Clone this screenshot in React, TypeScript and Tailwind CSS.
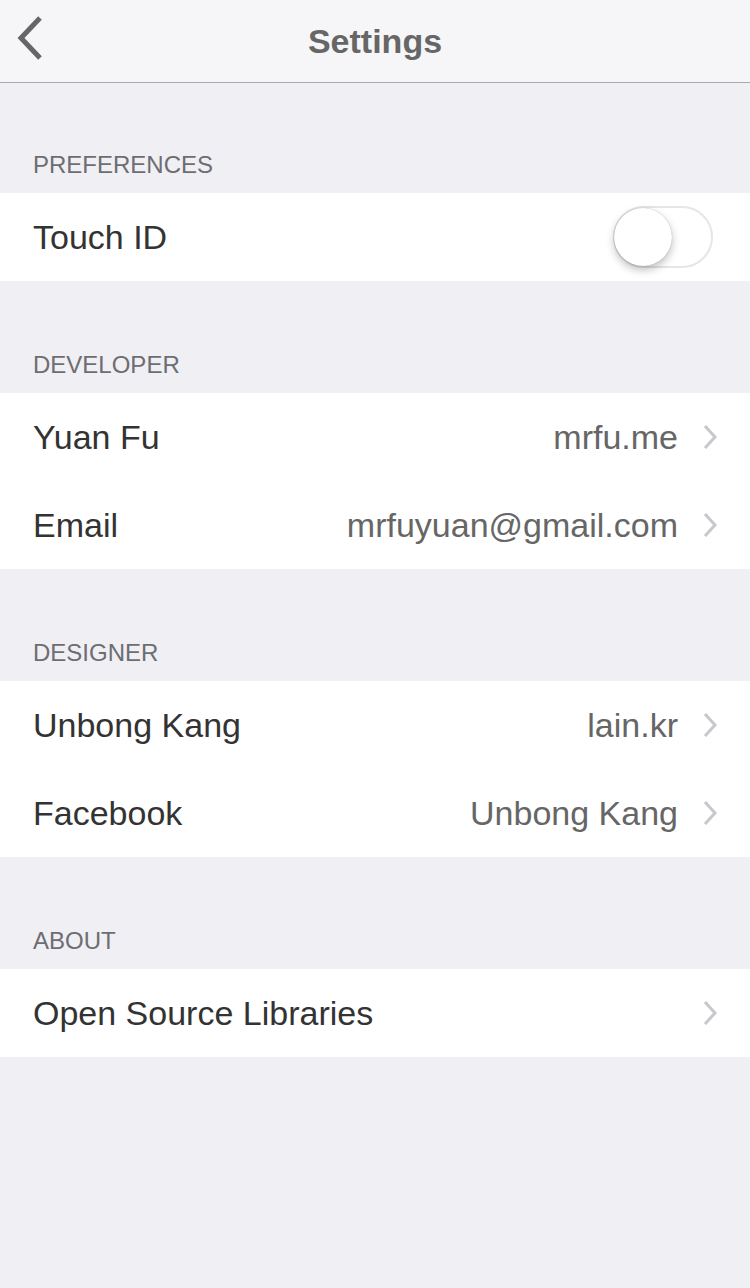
import React from "react";

const Chevron = () => (
  <svg width="16" height="26" viewBox="0 0 16 26" className="shrink-0">
    <path d="M3 2 L13 13 L3 24" fill="none" stroke="#c7c7cc" strokeWidth="3" />
  </svg>
);

const SectionLabel = ({ text, first }: { text: string; first?: boolean }) => (
  <div
    className={
      (first ? "h-[110px] " : "h-[112px] ") +
      "flex items-end pb-[16px] pl-[33px] text-[24px] text-[#6d6d72] leading-none"
    }
  >
    {text}
  </div>
);

const Row = ({ label, value }: { label: string; value?: string }) => (
  <div className="h-[88px] flex items-center pl-[33px] pr-[32px] bg-white">
    <span className="text-[34px] text-[#333333] flex-1">{label}</span>
    {value && <span className="text-[34px] text-[#666666] mr-[24px]">{value}</span>}
    <Chevron />
  </div>
);

export default function App() {
  return (
    <div
      className="w-[750px] h-[1288px] bg-[#efeff4] overflow-hidden"
      style={{ fontFamily: '"Liberation Sans", Arial, sans-serif' }}
    >
      <div className="h-[83px] bg-[#f6f6f8] border-b-[1.5px] border-[#a9a9ac] relative flex items-center justify-center">
        <svg width="30" height="46" viewBox="0 0 30 46" className="absolute left-[15px] top-[15px]">
          <path d="M25 3 L6 23 L25 43" fill="none" stroke="#666666" strokeWidth="5" />
        </svg>
        <span className="text-[34px] font-bold text-[#666666]">Settings</span>
      </div>

      <SectionLabel text="PREFERENCES" first />
      <div className="h-[88px] flex items-center pl-[33px] pr-[37px] bg-white">
        <span className="text-[34px] text-[#333333] flex-1">Touch ID</span>
        <div className="relative w-[100px] h-[62px] rounded-full border-[2px] border-[#e5e5ea] bg-white">
          <div className="absolute left-[-1px] top-[0px] w-[58px] h-[58px] rounded-full bg-white shadow-[0_4px_8px_rgba(0,0,0,0.25),0_0_1px_rgba(0,0,0,0.3)]" />
        </div>
      </div>

      <SectionLabel text="DEVELOPER" />
      <Row label="Yuan Fu" value="mrfu.me" />
      <Row label="Email" value="mrfuyuan@gmail.com" />

      <SectionLabel text="DESIGNER" />
      <Row label="Unbong Kang" value="lain.kr" />
      <Row label="Facebook" value="Unbong Kang" />

      <SectionLabel text="ABOUT" />
      <Row label="Open Source Libraries" />
    </div>
  );
}
